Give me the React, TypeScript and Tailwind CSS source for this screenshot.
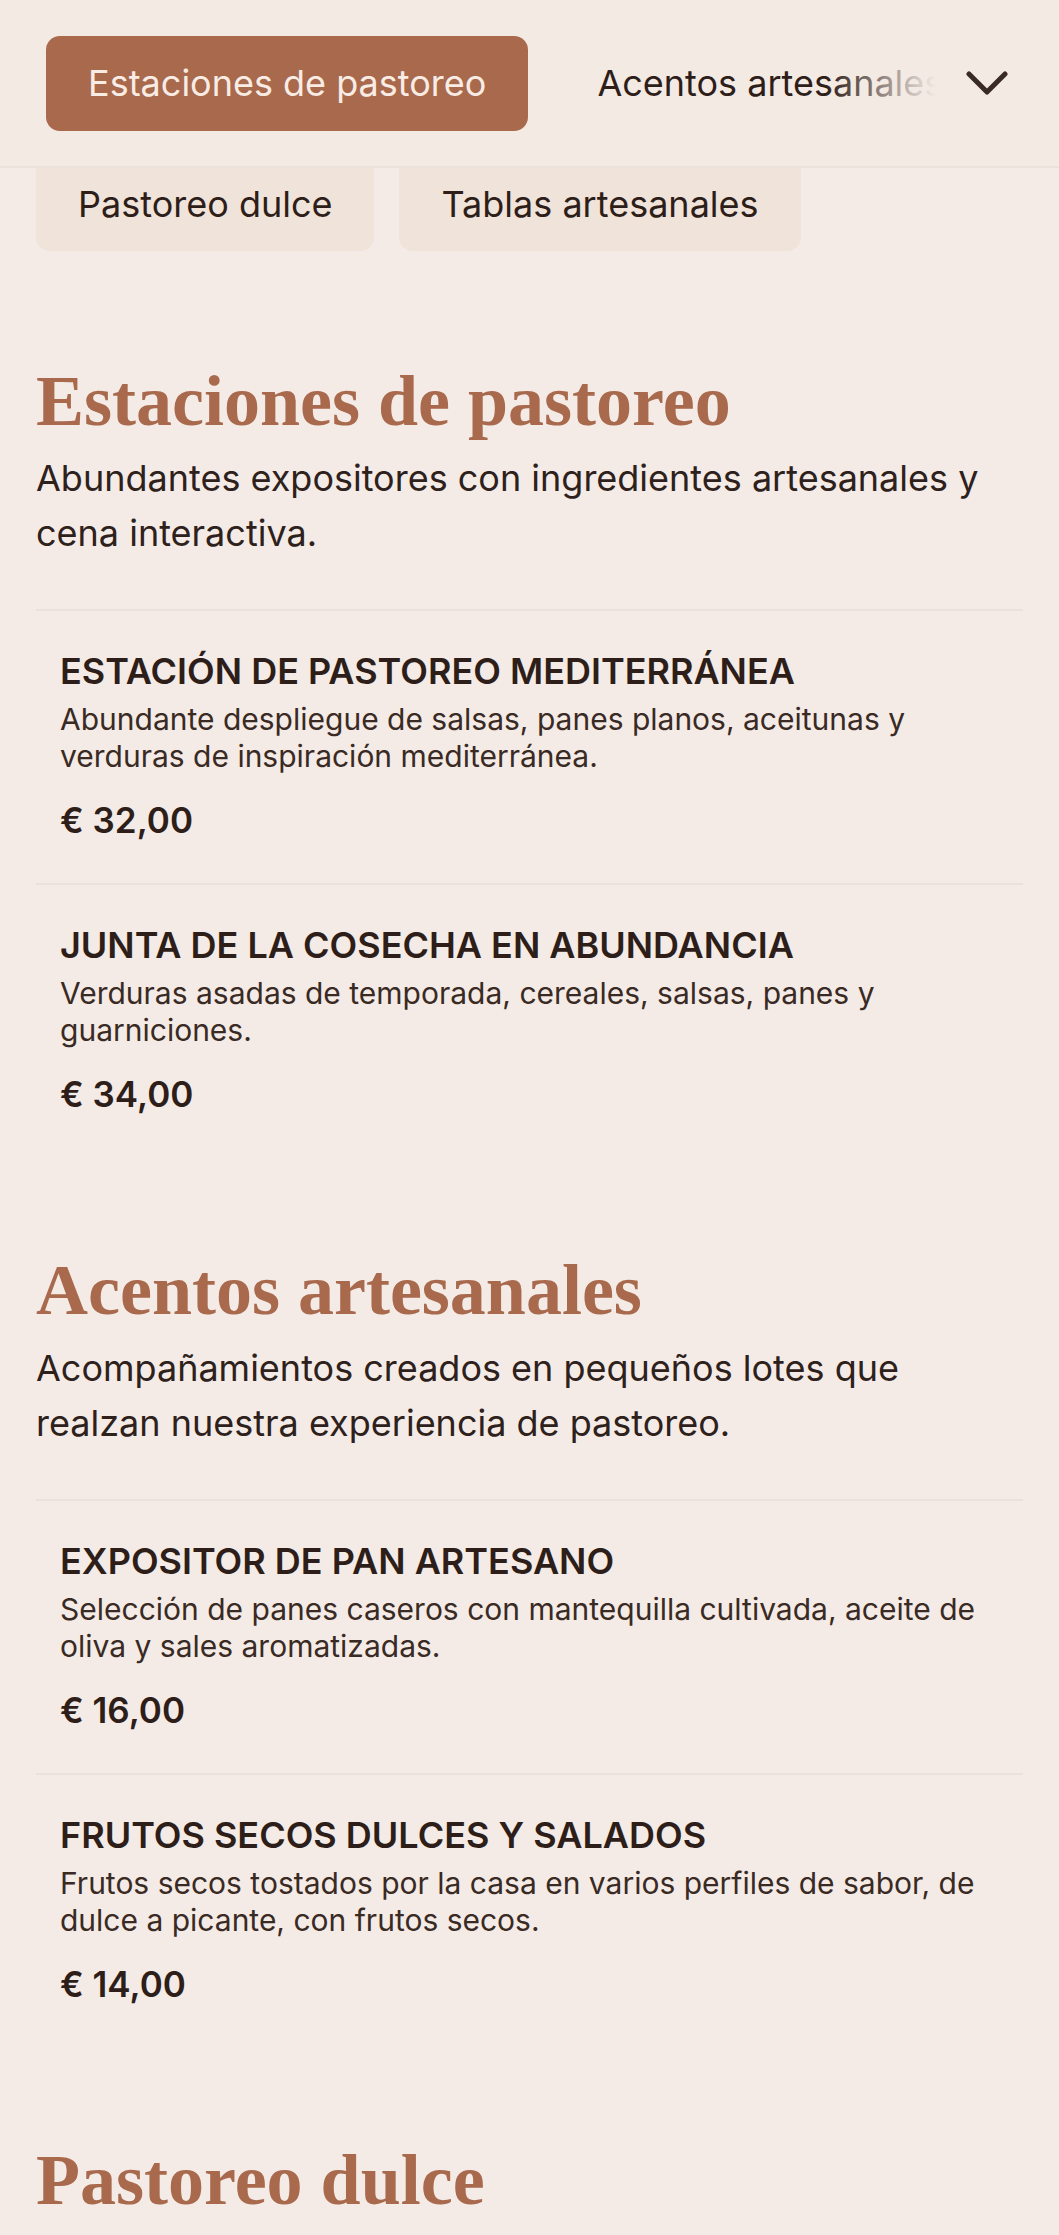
type Item = { name: string; description: string; price: string };
type Section = { id: string; title: string; description?: string; items: Item[] };

const tabs = ["Estaciones de pastoreo", "Acentos artesanales", "Pastoreo dulce", "Tablas artesanales"];

const sections: Section[] = [
  {
    id: "estaciones",
    title: "Estaciones de pastoreo",
    description: "Abundantes expositores con ingredientes artesanales y cena interactiva.",
    items: [
      {
        name: "Estación de pastoreo mediterránea",
        description: "Abundante despliegue de salsas, panes planos, aceitunas y verduras de inspiración mediterránea.",
        price: "€ 32,00",
      },
      {
        name: "Junta de la cosecha en abundancia",
        description: "Verduras asadas de temporada, cereales, salsas, panes y guarniciones.",
        price: "€ 34,00",
      },
    ],
  },
  {
    id: "acentos",
    title: "Acentos artesanales",
    description: "Acompañamientos creados en pequeños lotes que realzan nuestra experiencia de pastoreo.",
    items: [
      {
        name: "Expositor de pan artesano",
        description: "Selección de panes caseros con mantequilla cultivada, aceite de oliva y sales aromatizadas.",
        price: "€ 16,00",
      },
      {
        name: "Frutos secos dulces y salados",
        description: "Frutos secos tostados por la casa en varios perfiles de sabor, de dulce a picante, con frutos secos.",
        price: "€ 14,00",
      },
    ],
  },
  { id: "dulce", title: "Pastoreo dulce", items: [] },
];

function MenuItem({ item }: { item: Item }) {
  return (
    <li className="border-t-2 border-[#ece1da] px-[24px] pt-[40px] pb-[40px]">
      <h3 className="text-[36px] leading-[41px] font-semibold uppercase text-[#2e1e19]">{item.name}</h3>
      <p className="mt-[9px] text-[30px] leading-[37px] text-[#3a2a24]">{item.description}</p>
      <p className="mt-[22px] text-[35px] leading-[46px] font-semibold text-[#2e1e19]">{item.price}</p>
    </li>
  );
}

export default function App() {
  return (
    <div className="min-h-screen bg-[#f4ebe6] font-['Inter','Noto_Sans',sans-serif] text-[#2e1e19]">
      <header className="relative z-10 flex h-[168px] items-center border-b-2 border-[#ece2dc] bg-[#f4eae4] pl-[46px] pr-[51px]">
        <div className="relative flex-1 overflow-hidden">
          <div className="flex gap-[27px] whitespace-nowrap">
            {tabs.slice(0, 2).map((tab, i) => (
              <button
                key={tab}
                className={
                  i === 0
                    ? "h-[95px] shrink-0 rounded-[14px] bg-[#a8694d] px-[42px] text-[36px] text-[#f8ece4]"
                    : "h-[95px] shrink-0 rounded-[14px] px-[42px] text-[36px] text-[#2e1e19]"
                }
              >
                {tab}
              </button>
            ))}
          </div>
          <div className="pointer-events-none absolute inset-y-0 right-0 w-[110px] bg-gradient-to-r from-[#f4eae4]/0 to-[#f4eae4]" />
        </div>
        <button className="ml-[30px] flex h-[60px] w-[42px] items-center justify-center text-[#3a2a25]">
          <svg width="42" height="25" viewBox="0 0 42 25" fill="none">
            <path d="M3 3 L21 21 L39 3" stroke="currentColor" strokeWidth="5" strokeLinecap="round" strokeLinejoin="round" />
          </svg>
        </button>
      </header>

      <div className="-mt-[12px] flex gap-[25px] px-[36px]">
        {tabs.slice(2).map((tab) => (
          <button key={tab} className="h-[95px] rounded-[14px] bg-[#f0e3da] px-[42px] text-[36px] text-[#2e1e19]">
            {tab}
          </button>
        ))}
      </div>

      <main className="px-[36px] pt-[17px] pb-[10px]">
        {sections.map((section) => (
          <section key={section.id} className="pt-[90px]">
            <h2 className="font-['Liberation_Serif','Times_New_Roman',serif] text-[72px] leading-[1.2] font-bold text-[#a8694d]">
              {section.title}
            </h2>
            {section.description && (
              <p className="mt-[7px] text-[36px] leading-[55px] text-[#2e211c]">{section.description}</p>
            )}
            {section.items.length > 0 && (
              <ul className="mt-[48px]">
                {section.items.map((item) => (
                  <MenuItem key={item.name} item={item} />
                ))}
              </ul>
            )}
          </section>
        ))}
      </main>
    </div>
  );
}
